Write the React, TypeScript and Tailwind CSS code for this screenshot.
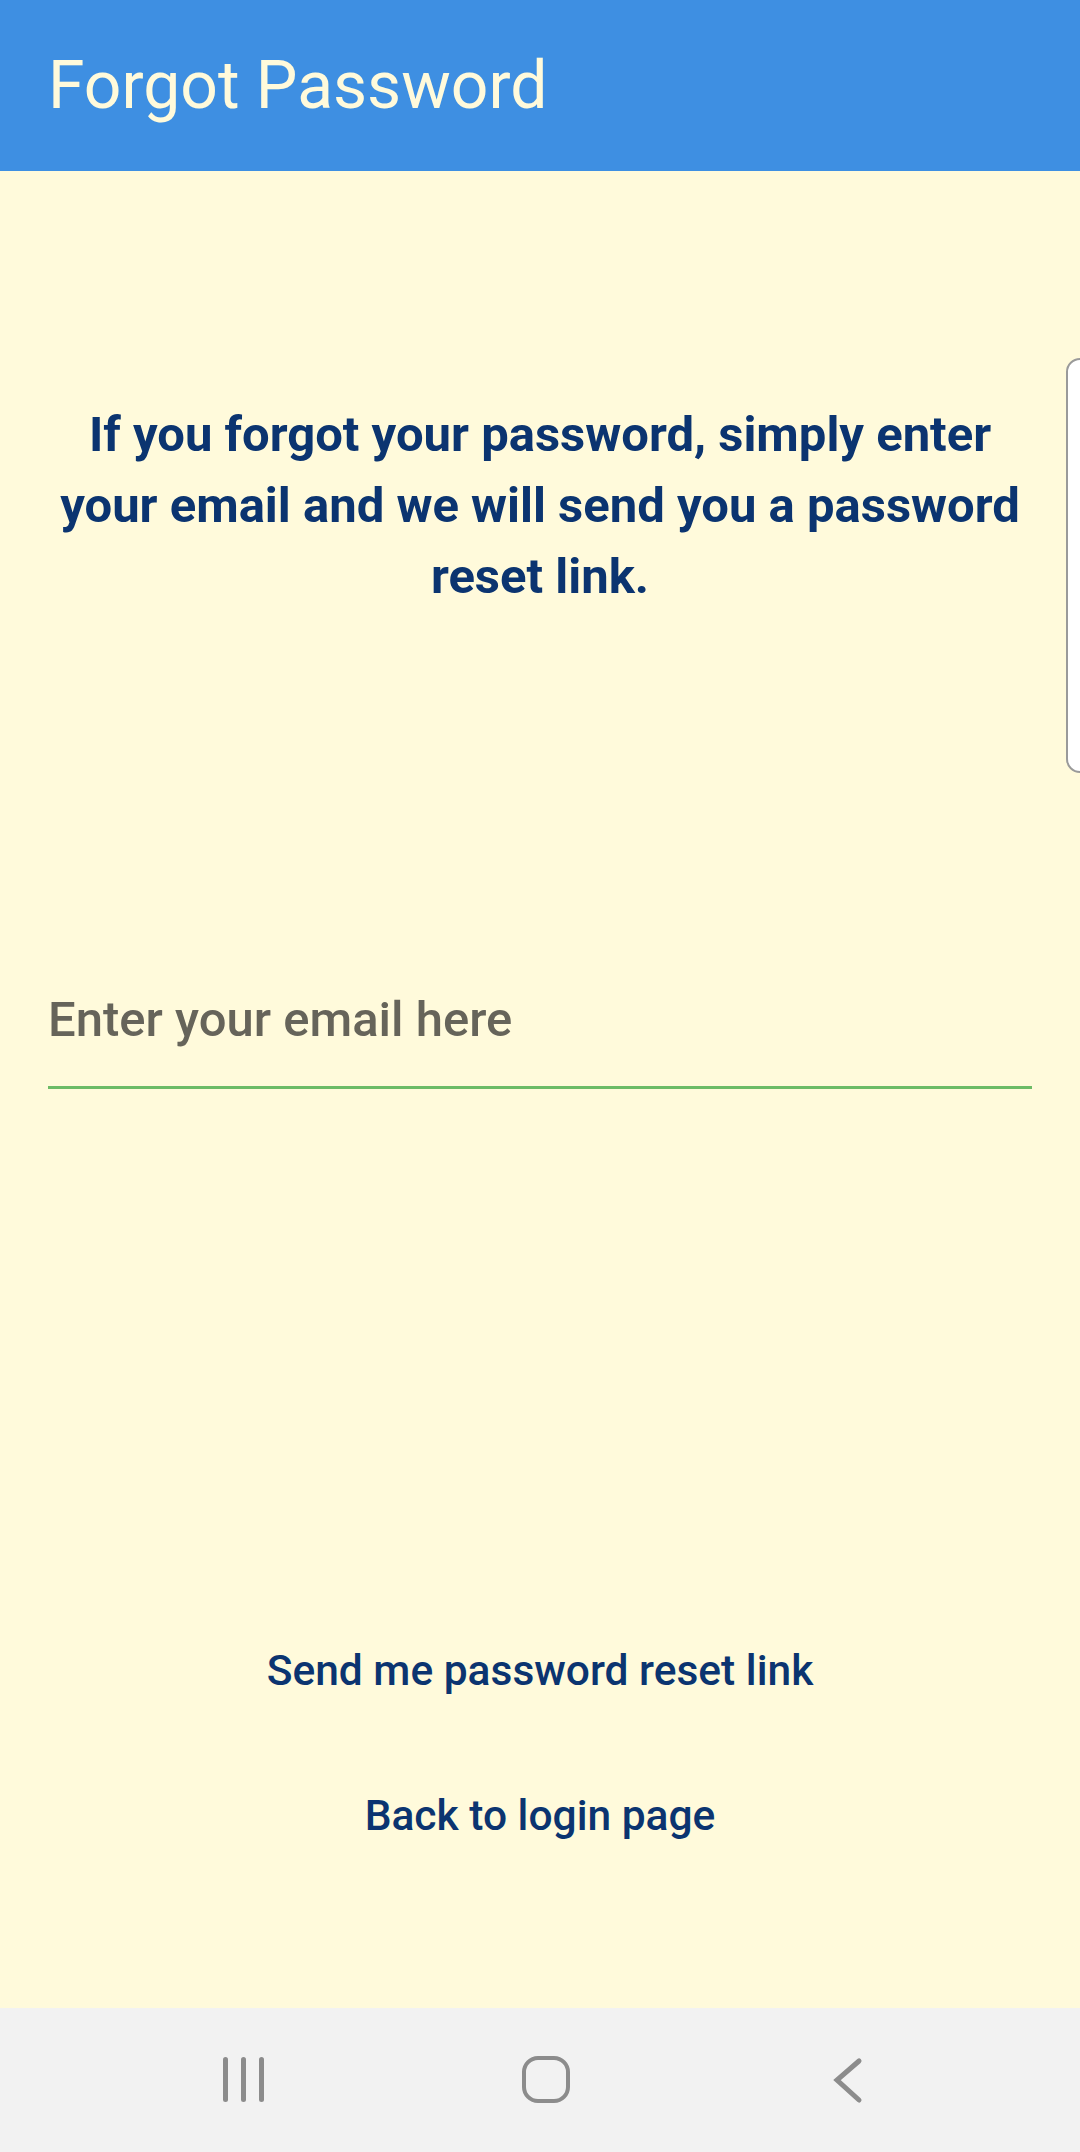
import React from 'react';

function NavBar() {
  return (
    <div className="h-[144px] bg-[#f2f2f2] flex items-center">
      <div className="relative w-full h-full">
        {/* recents */}
        <div className="absolute left-[223px] top-[49px] flex gap-[13px]">
          <span className="block w-[5px] h-[45px] rounded-full bg-[#8c8c8c]" />
          <span className="block w-[5px] h-[45px] rounded-full bg-[#8c8c8c]" />
          <span className="block w-[5px] h-[45px] rounded-full bg-[#8c8c8c]" />
        </div>
        {/* home */}
        <div className="absolute left-[522px] top-[48px] w-[48px] h-[47px] rounded-[16px] border-[4px] border-[#8c8c8c]" />
        {/* back */}
        <svg className="absolute left-[828px] top-[48px]" width="40" height="48" viewBox="0 0 40 48">
          <path d="M31 5 L9 24 L31 44" fill="none" stroke="#8c8c8c" strokeWidth="5" strokeLinecap="round" strokeLinejoin="miter" />
        </svg>
      </div>
    </div>
  );
}

export default function App() {
  return (
    <div
      className="relative w-[1080px] h-[2152px] flex flex-col bg-[#fffadb] overflow-hidden"
      style={{ fontFamily: 'Roboto, "Noto Sans", sans-serif' }}
    >
      <header className="h-[171px] bg-[#3e8fe2] flex items-center px-12 shrink-0">
        <h1 className="text-[66px] leading-none font-normal text-[#fffadb]">Forgot Password</h1>
      </header>

      <main className="flex-1 flex flex-col">
        <p className="mt-[228px] px-[48px] text-center text-[49px] leading-[71px] font-bold text-[#0b3470]">
          If you forgot your password, simply enter your email and we will send you a password reset link.
        </p>

        <div className="mt-[381px] mx-12">
          <div className="text-[49px] leading-[54px] font-medium text-[#66645a]">Enter your email here</div>
          <div className="mt-[39px] h-[3px] bg-[#6cbb66]" />
        </div>

        <button className="mt-[557px] self-center text-[42.5px] leading-[50px] font-medium text-[#0b3470]">
          Send me password reset link
        </button>
        <button className="mt-[95px] self-center text-[42.5px] leading-[50px] font-medium text-[#0b3470]">
          Back to login page
        </button>
      </main>

      <NavBar />

      {/* edge panel handle */}
      <div className="absolute left-[1066px] top-[358px] w-[30px] h-[415px] rounded-l-[14px] border-2 border-[#9a9a9a] bg-white" />
    </div>
  );
}
